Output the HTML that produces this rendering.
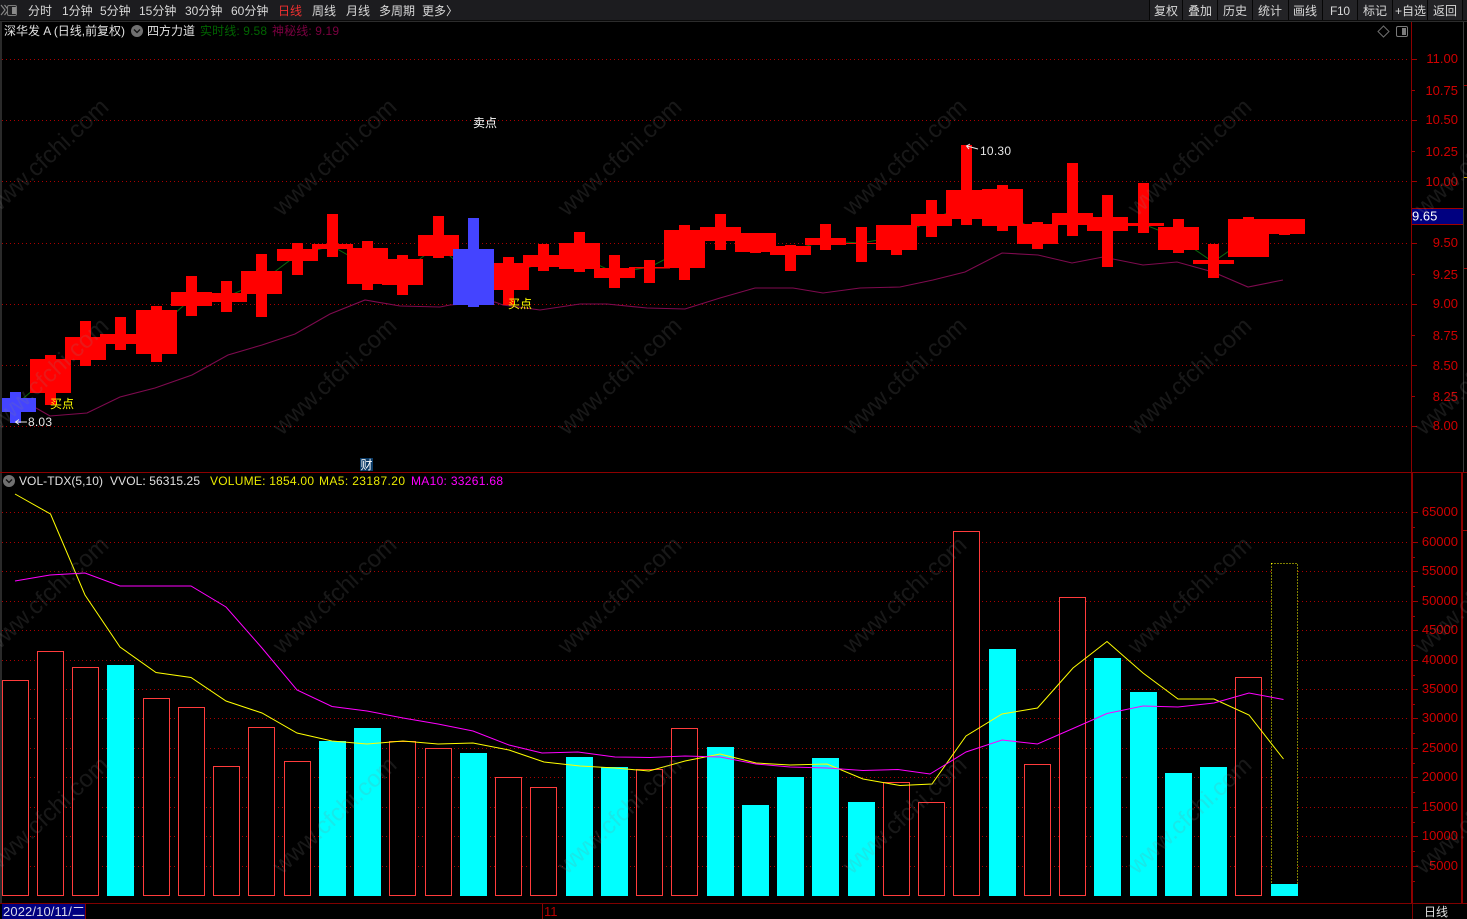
<!DOCTYPE html>
<html lang="zh-CN">
<head>
<meta charset="utf-8">
<title>K线</title>
<style>
html,body{margin:0;padding:0;background:#000;width:1467px;height:919px;overflow:hidden}
svg{display:block;position:absolute;left:0;top:0}
text{font-family:"Liberation Sans","Noto Sans CJK SC",sans-serif;font-size:12px;white-space:pre}
.tb text{fill:#d8d8d8}
.ax text{fill:#d00000;font-size:13px;text-anchor:end}
.wm text{fill:rgba(135,135,135,.18);font-size:24px}
</style>
</head>
<body>
<svg width="1467" height="919" viewBox="0 0 1467 919" xmlns="http://www.w3.org/2000/svg">
<rect width="1467" height="919" fill="#000"/>

<!-- toolbar -->
<rect x="0" y="0" width="1467" height="20" fill="#1c1c1f"/>
<rect x="0" y="20" width="1467" height="1" fill="#0a0a0a"/>
<rect x="0" y="21" width="1467" height="1" fill="#2c2c2c"/>
<rect x="1149" y="0" width="313" height="20" fill="#232326"/>
<path d="M1149.5 0V20M1182.5 0V20M1217.5 0V20M1252.5 0V20M1288.5 0V20M1322.5 0V20M1357.5 0V20M1392.5 0V20M1427.5 0V20M1462.5 0V20" stroke="#060606" fill="none"/>
<path d="M1 5L5 10L1 15M4.5 5L8.5 10L4.5 15" stroke="#8a8a8a" fill="none" stroke-width="1.1"/>
<rect x="7.5" y="5.5" width="9" height="10" rx="1.5" fill="#202022" stroke="#7a7a7a"/>
<rect x="12" y="7" width="4" height="7" fill="#8a8a8a"/>
<g class="tb">
<text x="28" y="15">分时</text>
<text x="62" y="15">1分钟</text>
<text x="100" y="15">5分钟</text>
<text x="139" y="15">15分钟</text>
<text x="185" y="15">30分钟</text>
<text x="231" y="15">60分钟</text>
<text x="278" y="15" style="fill:#f03030">日线</text>
<text x="312" y="15">周线</text>
<text x="346" y="15">月线</text>
<text x="379" y="15">多周期</text>
<text x="422" y="15">更多</text>
<text x="446" y="15">〉</text>
<text x="1154" y="15">复权</text>
<text x="1188" y="15">叠加</text>
<text x="1223" y="15">历史</text>
<text x="1258" y="15">统计</text>
<text x="1293" y="15">画线</text>
<text x="1330" y="15" textLength="20">F10</text>
<text x="1363" y="15">标记</text>
<text x="1395" y="15">+自选</text>
<text x="1433" y="15">返回</text>
</g>

<!-- frame -->
<rect x="0" y="22" width="2" height="881" fill="#2a2a2a"/>
<rect x="1463" y="22" width="1" height="450" fill="#3a3a3a"/>
<rect x="1411" y="22" width="1" height="450" fill="#8c0000"/>
<rect x="1411" y="472" width="2" height="431" fill="#8c0000"/>
<rect x="1461" y="472" width="2" height="431" fill="#8c0000"/>
<rect x="0" y="472" width="1467" height="1" fill="#8c0000"/>
<rect x="0" y="903" width="1467" height="1" fill="#800000"/>
<rect x="1412" y="903" width="1" height="16" fill="#800000"/>

<!-- grid -->
<path d="M2 59.5H1410M2 120.5H1410M2 181.5H1410M2 243.5H1410M2 304.5H1410M2 365.5H1410M2 426.5H1410" stroke="#aa0000" stroke-dasharray="1 3" fill="none" shape-rendering="crispEdges"/>
<path d="M2 512.5H1410M2 542.5H1410M2 571.5H1410M2 601.5H1410M2 630.5H1410M2 660.5H1410M2 689.5H1410M2 718.5H1410M2 748.5H1410M2 777.5H1410M2 807.5H1410M2 836.5H1410M2 866.5H1410" stroke="#aa0000" stroke-dasharray="1 3" fill="none" shape-rendering="crispEdges"/>

<!-- axis ticks -->
<path d="M1412 59.5h5M1412 90.5h3M1412 120.5h5M1412 151.5h3M1412 181.5h5M1412 212.5h3M1412 243.5h5M1412 274.5h3M1412 304.5h5M1412 335.5h3M1412 365.5h5M1412 396.5h3M1412 426.5h5M1464 85.5h3M1464 268.5h3M1463 530.5h4" stroke="#a00000" fill="none" shape-rendering="crispEdges"/>
<path d="M1464 177.5h3" stroke="#c8a000" fill="none"/>
<path d="M1413 512.5h5M1413 542.5h5M1413 571.5h5M1413 601.5h5M1413 630.5h5M1413 660.5h5M1413 689.5h5M1413 718.5h5M1413 748.5h5M1413 777.5h5M1413 807.5h5M1413 836.5h5M1413 866.5h5M1413 527.5h2M1413 557.5h2M1413 586.5h2M1413 616.5h2M1413 645.5h2M1413 675.5h2M1413 704.5h2M1413 733.5h2M1413 763.5h2M1413 792.5h2M1413 822.5h2M1413 851.5h2M1413 881.5h2" stroke="#a00000" fill="none" shape-rendering="crispEdges"/>
<g class="ax">
<text x="1458" y="63">11.00</text>
<text x="1458" y="95">10.75</text>
<text x="1458" y="124">10.50</text>
<text x="1458" y="156">10.25</text>
<text x="1458" y="186">10.00</text>
<text x="1458" y="247">9.50</text>
<text x="1458" y="279">9.25</text>
<text x="1458" y="308">9.00</text>
<text x="1458" y="340">8.75</text>
<text x="1458" y="370">8.50</text>
<text x="1458" y="401">8.25</text>
<text x="1458" y="430">8.00</text>
<text x="1458" y="516">65000</text>
<text x="1458" y="546">60000</text>
<text x="1458" y="575">55000</text>
<text x="1458" y="605">50000</text>
<text x="1458" y="634">45000</text>
<text x="1458" y="664">40000</text>
<text x="1458" y="693">35000</text>
<text x="1458" y="722">30000</text>
<text x="1458" y="752">25000</text>
<text x="1458" y="781">20000</text>
<text x="1458" y="811">15000</text>
<text x="1458" y="840">10000</text>
<text x="1458" y="870">5000</text>
</g>
<rect x="1412" y="208" width="51" height="17" fill="#000080"/>
<path d="M1412 208.5H1463M1412 224.5H1463" stroke="#a00000" fill="none"/>
<text x="1412" y="220.5" style="fill:#fff;font-size:13px">9.65</text>

<!-- legend price -->
<text x="4" y="35" style="fill:#e0e0e0" textLength="121">深华发 A (日线,前复权)</text>
<circle cx="137" cy="31" r="6" fill="#707070"/>
<path d="M134 29.5L137 32.5L140 29.5" stroke="#111" stroke-width="1.3" fill="none"/>
<text x="147" y="35" style="fill:#e0e0e0">四方力道</text>
<text x="200" y="35" style="fill:#006400" textLength="67">实时线: 9.58</text>
<text x="272" y="35" style="fill:#7a0040" textLength="67">神秘线: 9.19</text>
<path d="M1383.5 26L1389 31.5L1383.5 37L1378 31.5Z" stroke="#6e6e6e" fill="none"/>
<rect x="1396.5" y="26.5" width="11" height="10" rx="1.5" stroke="#7a7a7a" fill="none"/>
<rect x="1402" y="28" width="4" height="7" fill="#7a7a7a"/>

<!-- price lines -->
<polyline fill="none" stroke="#0b6a0b" stroke-width="1" points="15.5,405 50.5,375 85.5,348 120.5,339 156,330 191,299 226,297 261,282 297,255 332,246 367,266 403,272 438,245 473,277 509,276 544,261 580,256 615,273 650,267 685,249 720,234 755,243 791,250 826,241 861,243 896,237 932,220 967,204 1002,207 1037,234 1072,219 1107,224 1143,224 1178,238 1213,262 1248,238 1284,227"/>
<polyline fill="none" stroke="#7f0a4f" stroke-width="1.1" points="36,408 50,416 87,413 120,397 155,388 192,375 228,355 262,345 295,334 330,314 365,300 400,306 440,307 450,305 495,302 503,305 540,310 580,304 607,304 647,308 685,309 720,298 755,288 793,288 823,293 860,288 900,287 933,280 965,272 1002,253 1038,255 1072,263 1103,257 1143,265 1177,262 1213,272 1248,287 1283,280"/>

<!-- candles -->
<path fill="#ff0000" d="M30 359H71V393H30zM45 355H56V405H45zM65 337H106V360H65zM80 321H91V366H80zM100 334H141V344H100zM115 317H126V350H115zM136 310H177V354H136zM151 306H162V362H151zM171 292H212V306H171zM186 276H197V316H186zM206 293H247V302H206zM221 281H232V312H221zM241 271H282V294H241zM256 254H267V317H256zM277 249H318V261H277zM292 243H303V275H292zM312 244H353V249H312zM327 214H338V257H327zM347 248H388V284H347zM362 241H373V290H362zM382 259H423V285H382zM397 255H408V295H397zM418 235H459V256H418zM433 216H444V258H433zM488 263H529V290H488zM503 257H514V305H503zM523 255H564V267H523zM538 244H549V271H538zM559 243H600V269H559zM574 232H585V272H574zM594 268H635V278H594zM609 255H620V288H609zM629 267H670V268.5H629zM644 260H655V283H644zM664 230H705V268H664zM679 225H690V280H679zM700 227H741V241H700zM715 214H726V250H715zM735 233H776V252H735zM750 233H761V253H750zM770 246H811V255H770zM785 245H796V271H785zM805 238H846V245H805zM820 224H831V250H820zM841 243H882V244H841zM856 227H867V262H856zM876 225H917V250H876zM891 225H902V255H891zM911 214H952V226H911zM926 200H937V237H926zM946 190H987V219H946zM961 145H972V225H961zM982 189H1023V226H982zM997 185H1008V231H997zM1017 224H1058V244H1017zM1032 222H1043V249H1032zM1052 213H1093V225H1052zM1067 163H1078V236H1067zM1087 217H1128V231H1087zM1102 195H1113V267H1102zM1123 223H1164V226H1123zM1138 183H1149V233H1138zM1158 227H1199V250H1158zM1173 219H1184V253H1173zM1193 260H1234V264H1193zM1208 244H1219V278H1208zM1228 219H1269V257H1228zM1243 217H1254V257H1243zM1264 219H1305V234H1264zM1279 219H1290V235H1279z"/>
<path fill="#4444ff" d="M2 398H36V412H2zM10 392H21V423H10zM453 249H494V305H453zM468 218H479V307H468z"/>

<!-- annotations -->
<text x="473" y="127" style="fill:#fff">卖点</text>
<text x="50" y="408" style="fill:#ffff00">买点</text>
<text x="508" y="308" style="fill:#ffff00">买点</text>
<text x="28" y="426" style="fill:#e6e6e6" textLength="24">8.03</text>
<path d="M27 422H16M19 419.5L15.5 422L19 424.5" stroke="#e6e6e6" fill="none"/>
<text x="980" y="155" style="fill:#e6e6e6" textLength="31">10.30</text>
<path d="M978 149L967 146M970 144L966.5 146L969 149" stroke="#e6e6e6" fill="none"/>
<rect x="360" y="458" width="13" height="13" fill="#0a3a66"/>
<text x="360.5" y="469" style="fill:#fff">财</text>

<!-- legend volume -->
<circle cx="9" cy="481" r="6" fill="#707070"/>
<path d="M6 479.5L9 482.5L12 479.5" stroke="#111" stroke-width="1.3" fill="none"/>
<text x="19" y="485" style="fill:#e0e0e0" textLength="84">VOL-TDX(5,10)</text>
<text x="110" y="485" style="fill:#e0e0e0" textLength="90">VVOL: 56315.25</text>
<text x="210" y="485" style="fill:#eaea00" textLength="104">VOLUME: 1854.00</text>
<text x="319" y="485" style="fill:#eaea00" textLength="86">MA5: 23187.20</text>
<text x="411" y="485" style="fill:#ff00ff" textLength="92">MA10: 33261.68</text>

<!-- hollow bars -->
<g fill="#000" stroke="#ff3c3c" shape-rendering="crispEdges">
<rect x="2.5" y="680.5" width="26" height="215"/>
<rect x="37.5" y="651.5" width="26" height="244"/>
<rect x="72.5" y="667.5" width="26" height="228"/>
<rect x="143.5" y="698.5" width="26" height="197"/>
<rect x="178.5" y="707.5" width="26" height="188"/>
<rect x="213.5" y="766.5" width="26" height="129"/>
<rect x="248.5" y="727.5" width="26" height="168"/>
<rect x="284.5" y="761.5" width="26" height="134"/>
<rect x="389.5" y="741.5" width="26" height="154"/>
<rect x="425.5" y="748.5" width="26" height="147"/>
<rect x="495.5" y="777.5" width="26" height="118"/>
<rect x="530.5" y="787.5" width="26" height="108"/>
<rect x="636.5" y="769.5" width="26" height="126"/>
<rect x="671.5" y="728.5" width="26" height="167"/>
<rect x="883.5" y="782.5" width="26" height="113"/>
<rect x="918.5" y="802.5" width="26" height="93"/>
<rect x="953.5" y="531.5" width="26" height="364"/>
<rect x="1024.5" y="764.5" width="26" height="131"/>
<rect x="1059.5" y="597.5" width="26" height="298"/>
<rect x="1235.5" y="677.5" width="26" height="218"/>
</g>
<rect x="1271.5" y="563.5" width="26" height="324" fill="#000" stroke="#ffff00" stroke-dasharray="1 2" shape-rendering="crispEdges"/>
<!-- solid bars -->
<g fill="#00ffff">
<rect x="107" y="665" width="27" height="231"/>
<rect x="319" y="741" width="27" height="155"/>
<rect x="354" y="728" width="27" height="168"/>
<rect x="460" y="753" width="27" height="143"/>
<rect x="566" y="757" width="27" height="139"/>
<rect x="601" y="767" width="27" height="129"/>
<rect x="707" y="747" width="27" height="149"/>
<rect x="742" y="805" width="27" height="91"/>
<rect x="777" y="777" width="27" height="119"/>
<rect x="812" y="758" width="27" height="138"/>
<rect x="848" y="802" width="27" height="94"/>
<rect x="989" y="649" width="27" height="247"/>
<rect x="1094" y="658" width="27" height="238"/>
<rect x="1130" y="692" width="27" height="204"/>
<rect x="1165" y="773" width="27" height="123"/>
<rect x="1200" y="767" width="27" height="129"/>
<rect x="1271" y="884" width="27" height="12"/>
</g>

<!-- MA lines -->
<polyline fill="none" stroke="#ffff00" stroke-width="1" points="15,494 50.5,514 85,595 120,647 156,672.5 191,677.5 226,701 262,713 297,733 332,741 367,744 403,741 438,744 473,743 509,750 544,762 580,766 615,768 649,771 685,761 720,754 756,763 790,765 827,764 863,779 900,785.5 932,784 966,736 1002,714 1037.5,708 1073,668 1107,641.5 1143,673 1178,699 1214,699 1249,715 1283.5,759"/>
<polyline fill="none" stroke="#ff00ff" stroke-width="1" points="15,581 50,575 85,573 120,586 156,586 191,586 226,607 262,648 297,690 332,706.5 367,711 403,718 438,724 473,731 509,745 542,753 578,752 615,757 650,757.5 685,756 720,757 756,764 790,767 827,768 863,770.5 898,769.5 930,774 966,752 1002,740 1037.5,744 1073,728.5 1107,713.5 1143,706 1178,707 1214,703 1249,693 1283.5,699.5"/>

<!-- bottom axis -->
<rect x="2" y="904" width="84" height="15" fill="#000080"/>
<rect x="85" y="904" width="1" height="15" fill="#800000"/>
<text x="3" y="916" style="fill:#d8d8e8;font-size:13px" textLength="82">2022/10/11/二</text>
<rect x="542" y="904" width="1" height="15" fill="#900000"/>
<text x="544" y="916" style="fill:#b80000;font-size:13px">11</text>
<text x="1424" y="916" style="fill:#e0e0e0">日线</text>

<!-- watermark -->
<g class="wm">
<text transform="translate(-6 217) rotate(-43)">www.cfchi.com</text>
<text transform="translate(282 217) rotate(-43)">www.cfchi.com</text>
<text transform="translate(567 217) rotate(-43)">www.cfchi.com</text>
<text transform="translate(852 217) rotate(-43)">www.cfchi.com</text>
<text transform="translate(1137 217) rotate(-43)">www.cfchi.com</text>
<text transform="translate(1424 217) rotate(-43)">www.cfchi.com</text>
<text transform="translate(-6 436) rotate(-43)">www.cfchi.com</text>
<text transform="translate(282 436) rotate(-43)">www.cfchi.com</text>
<text transform="translate(567 436) rotate(-43)">www.cfchi.com</text>
<text transform="translate(852 436) rotate(-43)">www.cfchi.com</text>
<text transform="translate(1137 436) rotate(-43)">www.cfchi.com</text>
<text transform="translate(1424 436) rotate(-43)">www.cfchi.com</text>
<text transform="translate(-6 655) rotate(-43)">www.cfchi.com</text>
<text transform="translate(282 655) rotate(-43)">www.cfchi.com</text>
<text transform="translate(567 655) rotate(-43)">www.cfchi.com</text>
<text transform="translate(852 655) rotate(-43)">www.cfchi.com</text>
<text transform="translate(1137 655) rotate(-43)">www.cfchi.com</text>
<text transform="translate(1424 655) rotate(-43)">www.cfchi.com</text>
<text transform="translate(-6 875) rotate(-43)">www.cfchi.com</text>
<text transform="translate(282 875) rotate(-43)">www.cfchi.com</text>
<text transform="translate(567 875) rotate(-43)">www.cfchi.com</text>
<text transform="translate(852 875) rotate(-43)">www.cfchi.com</text>
<text transform="translate(1137 875) rotate(-43)">www.cfchi.com</text>
<text transform="translate(1424 875) rotate(-43)">www.cfchi.com</text>
</g>
</svg>
</body>
</html>
